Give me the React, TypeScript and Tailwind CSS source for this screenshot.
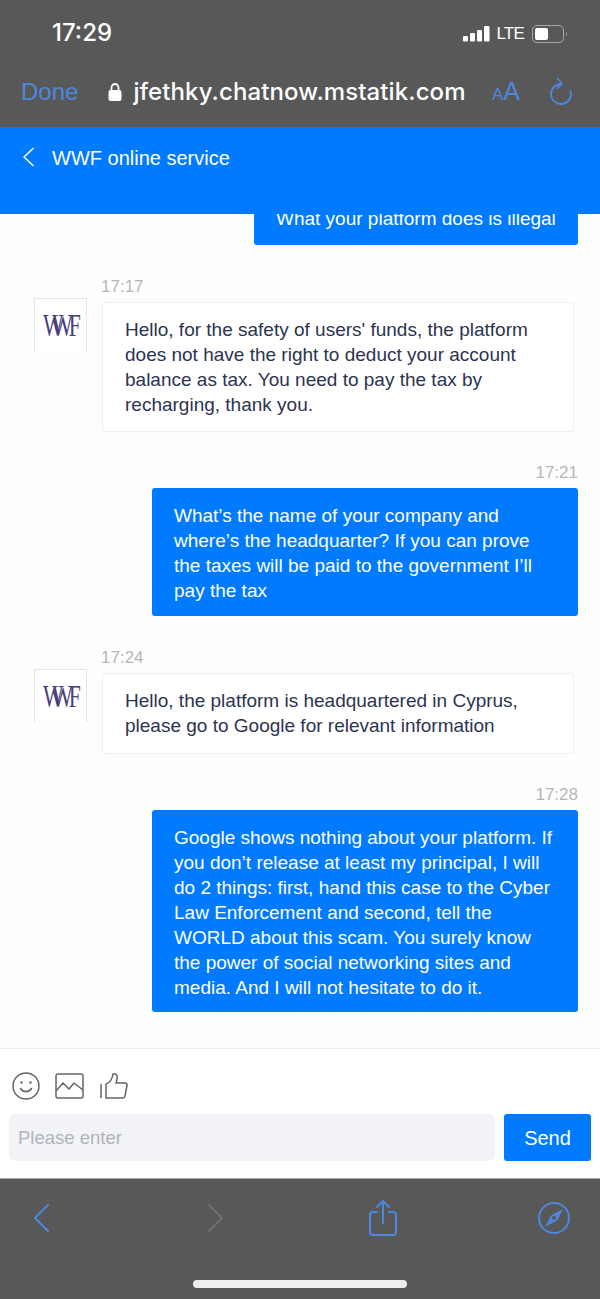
import React from 'react';

const sans = { fontFamily: '"Liberation Sans", Arial, sans-serif' };

const Logo = () => (
    <div className="w-[53px] h-[53px] shrink-0 bg-white border-x border-t border-[#e4e4e8] flex items-center justify-center overflow-hidden pl-[2px]">
        <span className="flex text-[31px] leading-none text-[#4a3f78] scale-x-[0.7] [font-family:'Liberation_Serif',serif]">
            <span className="tracking-[-16px]">W</span>
            <span className="tracking-[-6px]">W</span>
            <span>F</span>
        </span>
    </div>
);

const Incoming: React.FC<{ time: string; h: string; children: React.ReactNode }> = ({ time, h, children }) => (
    <div className="flex flex-col shrink-0">
        <div className="pl-[101px] h-[26px] text-[17px] leading-[20px] text-[#b5b6b9] pt-[5px]">{time}</div>
        <div className="flex pl-[34px] items-start">
            <Logo />
            <div className={`ml-[15px] mt-[4px] w-[472px] ${h} bg-white border border-[#eeeef0] rounded-[3px] pl-[22px] pr-[14px] pt-[14px] text-[19px] leading-[25px] text-[#2c3450]`}>
                {children}
            </div>
        </div>
    </div>
);

const Outgoing: React.FC<{ time: string; h: string; children: React.ReactNode }> = ({ time, h, children }) => (
    <div className="flex flex-col items-end pr-[22px] shrink-0">
        <div className="h-[26px] text-[17px] leading-[20px] text-[#b5b6b9] pt-[1px]">{time}</div>
        <div className={`w-[426px] ${h} bg-[#007aff] rounded-[3px] pl-[22px] pr-[19px] pt-[15px] text-[19px] leading-[25px] text-white`}>
            {children}
        </div>
    </div>
);

export default function App() {
    return (
        <div className="w-[600px] h-[1299px] flex flex-col overflow-hidden bg-white" style={sans}>
            {/* browser chrome */}
            <div className="h-[127px] shrink-0 bg-[#585858] flex flex-col">
                <div className="h-[66px] flex items-center justify-between pl-[52px] pr-[32px] [font-family:Inter,sans-serif]">
                    <span className="text-[24px] text-white font-medium">17:29</span>
                    <div className="flex items-center">
                        <svg className="mt-[2px]" width="27" height="16" viewBox="0 0 27 16" fill="white">
                            <rect x="0" y="10" width="5" height="5.500" rx="1.200" />
                            <rect x="7" y="7" width="5" height="8.500" rx="1.200" />
                            <rect x="14" y="4" width="5" height="11.500" rx="1.200" />
                            <rect x="21" y="0" width="5.500" height="15.500" rx="1.200" />
                        </svg>
                        <span className="ml-[6px] mt-[2px] text-[17px] text-white font-normal tracking-[-0.8px] [font-family:'Liberation_Sans',sans-serif]">LTE</span>
                        <svg className="ml-[8px] mt-[1px]" width="36" height="20" viewBox="0 0 36 20" fill="none">
                            <rect x="0.500" y="1.500" width="31" height="17" rx="4.500" stroke="#a8a8a8" />
                            <rect x="3" y="4" width="13" height="12" rx="2" fill="white" />
                            <path d="M34 7.500c1 .5 1.200 4.500 0 5z" fill="#a8a8a8" />
                        </svg>
                    </div>
                </div>
                <div className="flex-1 flex items-center pl-[21px] pr-[27px] pb-[9px]">
                    <span className="text-[24px] text-[#4d88de]">Done</span>
                    <svg className="ml-[30px]" width="14" height="20" viewBox="0 0 14 20" fill="none">
                        <path d="M3.500 9V5.500a3.500 3.500 0 0 1 7 0V9" stroke="white" strokeWidth="1.800" />
                        <rect x="0.500" y="8" width="13" height="11" rx="2" fill="white" />
                    </svg>
                    <span className="ml-[11px] text-[24px] text-white font-medium tracking-[0.1px] whitespace-nowrap [font-family:Inter,sans-serif]">jfethky.chatnow.mstatik.com</span>
                    <span className="ml-auto text-[#4d88de] flex items-baseline">
                        <span className="text-[17px]">A</span>
                        <span className="text-[25px]">A</span>
                    </span>
                    <svg className="ml-[29px]" width="24" height="30" viewBox="0 0 24 30" fill="none" stroke="#4d88de" strokeWidth="1.800" strokeLinecap="round" strokeLinejoin="round">
                        <path d="M12 7a10 10 0 1 0 9.500 7" />
                        <path d="M8.500 1.500 13 6.500 8.500 11" />
                    </svg>
                </div>
            </div>

            {/* chat header */}
            <div className="h-[87px] shrink-0 bg-[#007aff] flex items-start pl-[21px] pt-[19px] z-10">
                <svg width="14" height="22" viewBox="0 0 14 22" fill="none" stroke="white" strokeWidth="1.600" strokeLinecap="round" strokeLinejoin="round">
                    <path d="M12 2.500 3 11l9 8.500" />
                </svg>
                <span className="ml-[17px] text-[20px] leading-[24px] text-white">WWF online service</span>
            </div>

            {/* messages */}
            <div className="h-[834px] shrink-0 overflow-hidden bg-[#fefefe] flex flex-col justify-end pb-[36px]">
                <div className="flex justify-end pr-[22px] shrink-0">
                    <div className="w-[324px] h-[60px] bg-[#007aff] rounded-[3px] pl-[22px] pt-[21px] text-[19px] leading-[25px] text-white whitespace-nowrap">
                        What your platform does is illegal
                    </div>
                </div>
                <div className="h-[27px] shrink-0" />
                <Incoming time="17:17" h="h-[130px]">
                    Hello, for the safety of users' funds, the platform does not have the right to deduct your account balance as tax. You need to pay the tax by recharging, thank you.
                </Incoming>
                <div className="h-[30px] shrink-0" />
                <Outgoing time="17:21" h="h-[128px]">
                    What’s the name of your company and where’s the headquarter? If you can prove the taxes will be paid to the government I’ll pay the tax
                </Outgoing>
                <div className="h-[27px] shrink-0" />
                <Incoming time="17:24" h="h-[81px]">
                    Hello, the platform is headquartered in Cyprus, please go to Google for relevant information
                </Incoming>
                <div className="h-[30px] shrink-0" />
                <Outgoing time="17:28" h="h-[202px]">
                    Google shows nothing about your platform. If you don’t release at least my principal, I will do 2 things: first, hand this case to the Cyber Law Enforcement and second, tell the WORLD about this scam. You surely know the power of social networking sites and media. And I will not hesitate to do it.
                </Outgoing>
            </div>

            {/* composer */}
            <div className="h-[130px] shrink-0 bg-white border-t border-[#ededed] flex flex-col">
                <div className="flex items-center h-[65px] pl-[12px] pt-[8px]">
                    <svg width="28" height="28" viewBox="0 0 28 28" fill="none" stroke="#666" strokeWidth="1.500" strokeLinecap="round">
                        <circle cx="14" cy="14" r="13" />
                        <path d="M8.500 16.500c2.500 4 8.500 4 11 0" />
                        <circle cx="9.500" cy="10.500" r="0.500" />
                        <circle cx="18.500" cy="10.500" r="0.500" />
                    </svg>
                    <svg className="ml-[15px]" width="29" height="26" viewBox="0 0 29 26" fill="none" stroke="#666" strokeWidth="1.500" strokeLinejoin="round">
                        <rect x="1" y="1" width="27" height="24" rx="2" />
                        <path d="M1 18 8 10l6 6 5-6 9 7" />
                    </svg>
                    <svg className="ml-[16px]" width="28" height="26" viewBox="0 0 28 26" fill="none" stroke="#666" strokeWidth="1.500" strokeLinejoin="round">
                        <path d="M1 11v14" />
                        <path d="M6 11c4-1 6-4 7-10 3-1 5 2 4 5l-1 4h9c1.500 0 2.500 1 2 2.500l-2 10.500c-.2 1.200-1 2-2 2H6z" />
                    </svg>
                </div>
                <div className="flex pl-[9px] pr-[9px]">
                    <div className="w-[486px] h-[47px] bg-[#f1f3f7] rounded-[6px] flex items-center pl-[9px] text-[18.500px] text-[#b2b4bb]">Please enter</div>
                    <div className="ml-[9px] w-[87px] h-[47px] bg-[#007aff] rounded-[3px] flex items-center justify-center text-[20px] text-white">Send</div>
                </div>
            </div>

            {/* browser toolbar */}
            <div className="flex-1 bg-[#585858] border-t border-[#a8a8a8] flex flex-col">
                <div className="h-[77px] flex items-center pl-[33px]">
                    <svg width="18" height="30" viewBox="0 0 18 30" fill="none" stroke="#4d88de" strokeWidth="2" strokeLinecap="round" strokeLinejoin="round">
                        <path d="M15 2 2 15l13 13" />
                    </svg>
                    <svg className="ml-[155px]" width="18" height="30" viewBox="0 0 18 30" fill="none" stroke="#6f6f6f" strokeWidth="2" strokeLinecap="round" strokeLinejoin="round">
                        <path d="M3 2l13 13L3 28" />
                    </svg>
                    <svg className="ml-[144px]" width="30" height="36" viewBox="0 0 30 36" fill="none" stroke="#4d88de" strokeWidth="2" strokeLinecap="round" strokeLinejoin="round">
                        <path d="M15 23V2M9 7l6-6 6 6" />
                        <path d="M9 12H4a3 3 0 0 0-2 3v17a3 3 0 0 0 3 3h20a3 3 0 0 0 3-3V15a3 3 0 0 0-3-3h-4" />
                    </svg>
                    <svg className="ml-[139px]" width="34" height="34" viewBox="0 0 34 34" fill="none">
                        <circle cx="17" cy="17" r="15" stroke="#4d88de" strokeWidth="2" />
                        <path d="M26 8 14 14.500 8 26l12-6.500z" fill="#4d88de" />
                        <circle cx="17" cy="17" r="2" fill="#585858" />
                    </svg>
                </div>
                <div className="flex justify-center pt-[24px]">
                    <div className="w-[214px] h-[8px] rounded-full bg-[#eeeeee]" />
                </div>
            </div>
        </div>
    );
}
